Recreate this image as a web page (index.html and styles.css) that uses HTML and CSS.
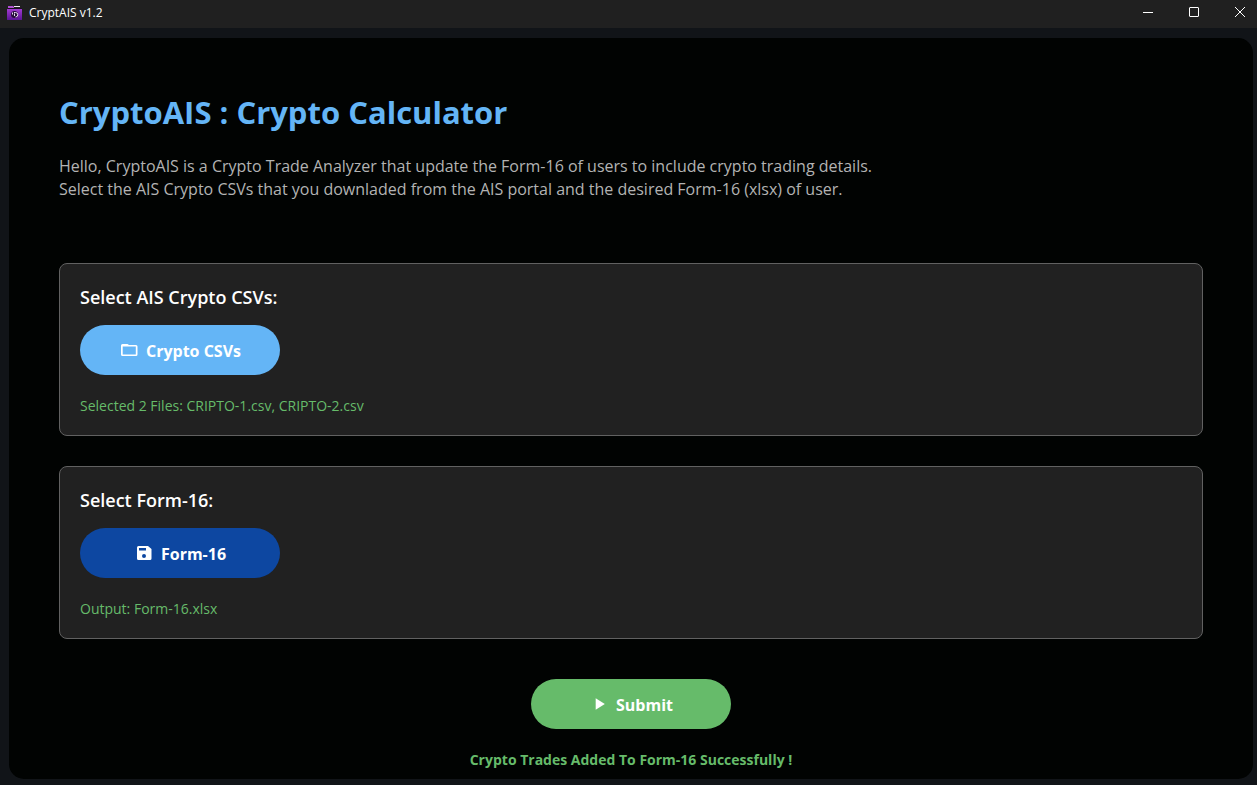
FILE: index.html
```html
<!DOCTYPE html>
<html lang="en">
<head>
<meta charset="utf-8">
<title>CryptAIS v1.2</title>
<link rel="stylesheet" href="styles.css">
</head>
<body>
<header class="titlebar">
  <svg class="app-icon" viewBox="0 0 16 16" aria-hidden="true">
    <defs><linearGradient id="folder" x1="0" y1="0" x2="0" y2="1"><stop offset="0" stop-color="#a23ad2"/><stop offset="1" stop-color="#5b1596"/></linearGradient></defs>
    <path fill="#b04fd0" d="M1 1h5l1 1v2H1z"/>
    <path fill="#f3e6f4" d="M7 1h6v1H7z"/>
    <path fill="#17101d" d="M1 3h14v1H1z"/>
    <path fill="url(#folder)" d="M0 4h15v10.500a.5.5 0 0 1-.5.5H.5a.5.5 0 0 1-.5-.5z"/>
    <circle cx="7.500" cy="9.500" r="3.500" fill="#26103a"/>
    <path d="M5.500 7.500v2M7 7.500h1.500a2 2 0 0 1 0 4.500M7.500 8.500v2.500" fill="none" stroke="#e9d8f5"/>
  </svg>
  <span class="app-name">CryptAIS v1.2</span>
  <button class="win-btn" aria-label="Minimize"><svg viewBox="0 0 12 12"><path d="M1 6.500h10"/></svg></button>
  <button class="win-btn" aria-label="Maximize"><svg viewBox="0 0 12 12"><rect x="1.500" y="1.500" width="9" height="9" rx="0.500"/></svg></button>
  <button class="win-btn" aria-label="Close"><svg viewBox="0 0 12 12"><path d="M1 1l10 10M11 1L1 11"/></svg></button>
</header>
<main class="panel">
  <h1 class="title">CryptoAIS : Crypto Calculator</h1>
  <p class="intro">Hello, CryptoAIS is a Crypto Trade Analyzer that update the Form-16 of users to include crypto trading details.<br>Select the AIS Crypto CSVs that you downladed from the AIS portal and the desired Form-16 (xlsx) of user.</p>
  <section class="card">
    <h2 class="card-title">Select AIS Crypto CSVs:</h2>
    <button class="btn btn-csv"><svg viewBox="0 0 20 20" aria-hidden="true"><path fill-rule="evenodd" d="M3.500 4H8.500l1.500 1h7A1.500 1.500 0 0 1 18.500 6.500v8a1.500 1.500 0 0 1-1.500 1.500h-13.500A1.500 1.500 0 0 1 2 14.500v-9A1.500 1.500 0 0 1 3.500 4zM3.700 6.600v7.900h13.100V6.600z"/></svg><span>Crypto CSVs</span></button>
    <p class="status">Selected 2 Files: CRIPTO-1.csv, CRIPTO-2.csv</p>
  </section>
  <section class="card">
    <h2 class="card-title">Select Form-16:</h2>
    <button class="btn btn-form"><svg viewBox="0 0 20 20" aria-hidden="true"><path fill-rule="evenodd" d="M4.500 3H14l3.500 3v9.500A1.500 1.500 0 0 1 16 17H4.500A1.500 1.500 0 0 1 3 15.500v-11A1.500 1.500 0 0 1 4.500 3zM5 5v2.500h7V5zM10 11a2 2 0 1 0 0 4 2 2 0 0 0 0-4z"/></svg><span>Form-16</span></button>
    <p class="status">Output: Form-16.xlsx</p>
  </section>
  <div class="submit-area">
    <button class="btn btn-submit"><svg viewBox="0 0 24 24" aria-hidden="true"><path d="M8 5v14l11-7z"/></svg><span>Submit</span></button>
    <p class="result">Crypto Trades Added To Form-16 Successfully !</p>
  </div>
</main>
</body>
</html>
```
FILE: styles.css
```css
* { box-sizing: border-box; }
body {
  margin: 0;
  min-height: 100vh;
  display: flex;
  flex-direction: column;
  background: #111418;
  color: #fff;
  font-family: "Segoe UI", "Open Sans", "Noto Sans", sans-serif;
}
h1, h2, p { margin: 0; }
button { border: 0; padding: 0; color: inherit; font-family: inherit; }
.titlebar {
  display: flex;
  align-items: center;
  height: 28px;
  padding-left: 7px;
  background: #202020;
}
.app-icon { width: 16px; height: 16px; margin: 0 6px 2px 0; }
.app-name { flex: 1; font-size: 12px; line-height: 16px; padding-bottom: 2px; }
.win-btn {
  width: 46px;
  height: 28px;
  padding-bottom: 4px;
  background: none;
  display: flex;
  align-items: center;
  justify-content: center;
}
.win-btn:last-child { width: 40px; padding-left: 6px; }
.win-btn svg { width: 12px; height: 12px; fill: none; stroke: #fff; }
.panel {
  flex: 1;
  margin: 10px 4px 6px 9px;
  padding: 49px 50px 0;
  border-radius: 15px;
  background: #010302;
}
.title { color: #64b5f6; font-size: 31px; line-height: 50px; font-weight: 700; }
.intro { margin: 18px 0 62px; color: #b3b3b3; font-size: 16px; line-height: 23px; }
.card {
  margin-bottom: 30px;
  padding: 20px;
  border: 1px solid #616161;
  border-radius: 8px;
  background: #212121;
}
.card-title { font-size: 18px; line-height: 26px; font-weight: 600; margin-bottom: 15px; }
.btn {
  display: flex;
  align-items: center;
  justify-content: center;
  gap: 7px;
  width: 200px;
  height: 50px;
  border-radius: 25px;
  font-size: 16px;
  line-height: 22px;
  font-weight: 700;
}
.btn svg { width: 20px; height: 20px; fill: #fff; }
.btn span { padding-top: 2px; }
.btn-csv { background: #64b5f6; }
.btn-form { background: #0d47a1; }
.btn-submit { background: #66bb6a; }
.status { padding-top: 21px; color: #66bb6a; font-size: 14px; line-height: 19px; }
.submit-area {
  display: flex;
  flex-direction: column;
  align-items: center;
  padding-top: 10px;
}
.result { margin-top: 21px; color: #66bb6a; font-size: 14px; line-height: 20px; font-weight: 700; }
```
